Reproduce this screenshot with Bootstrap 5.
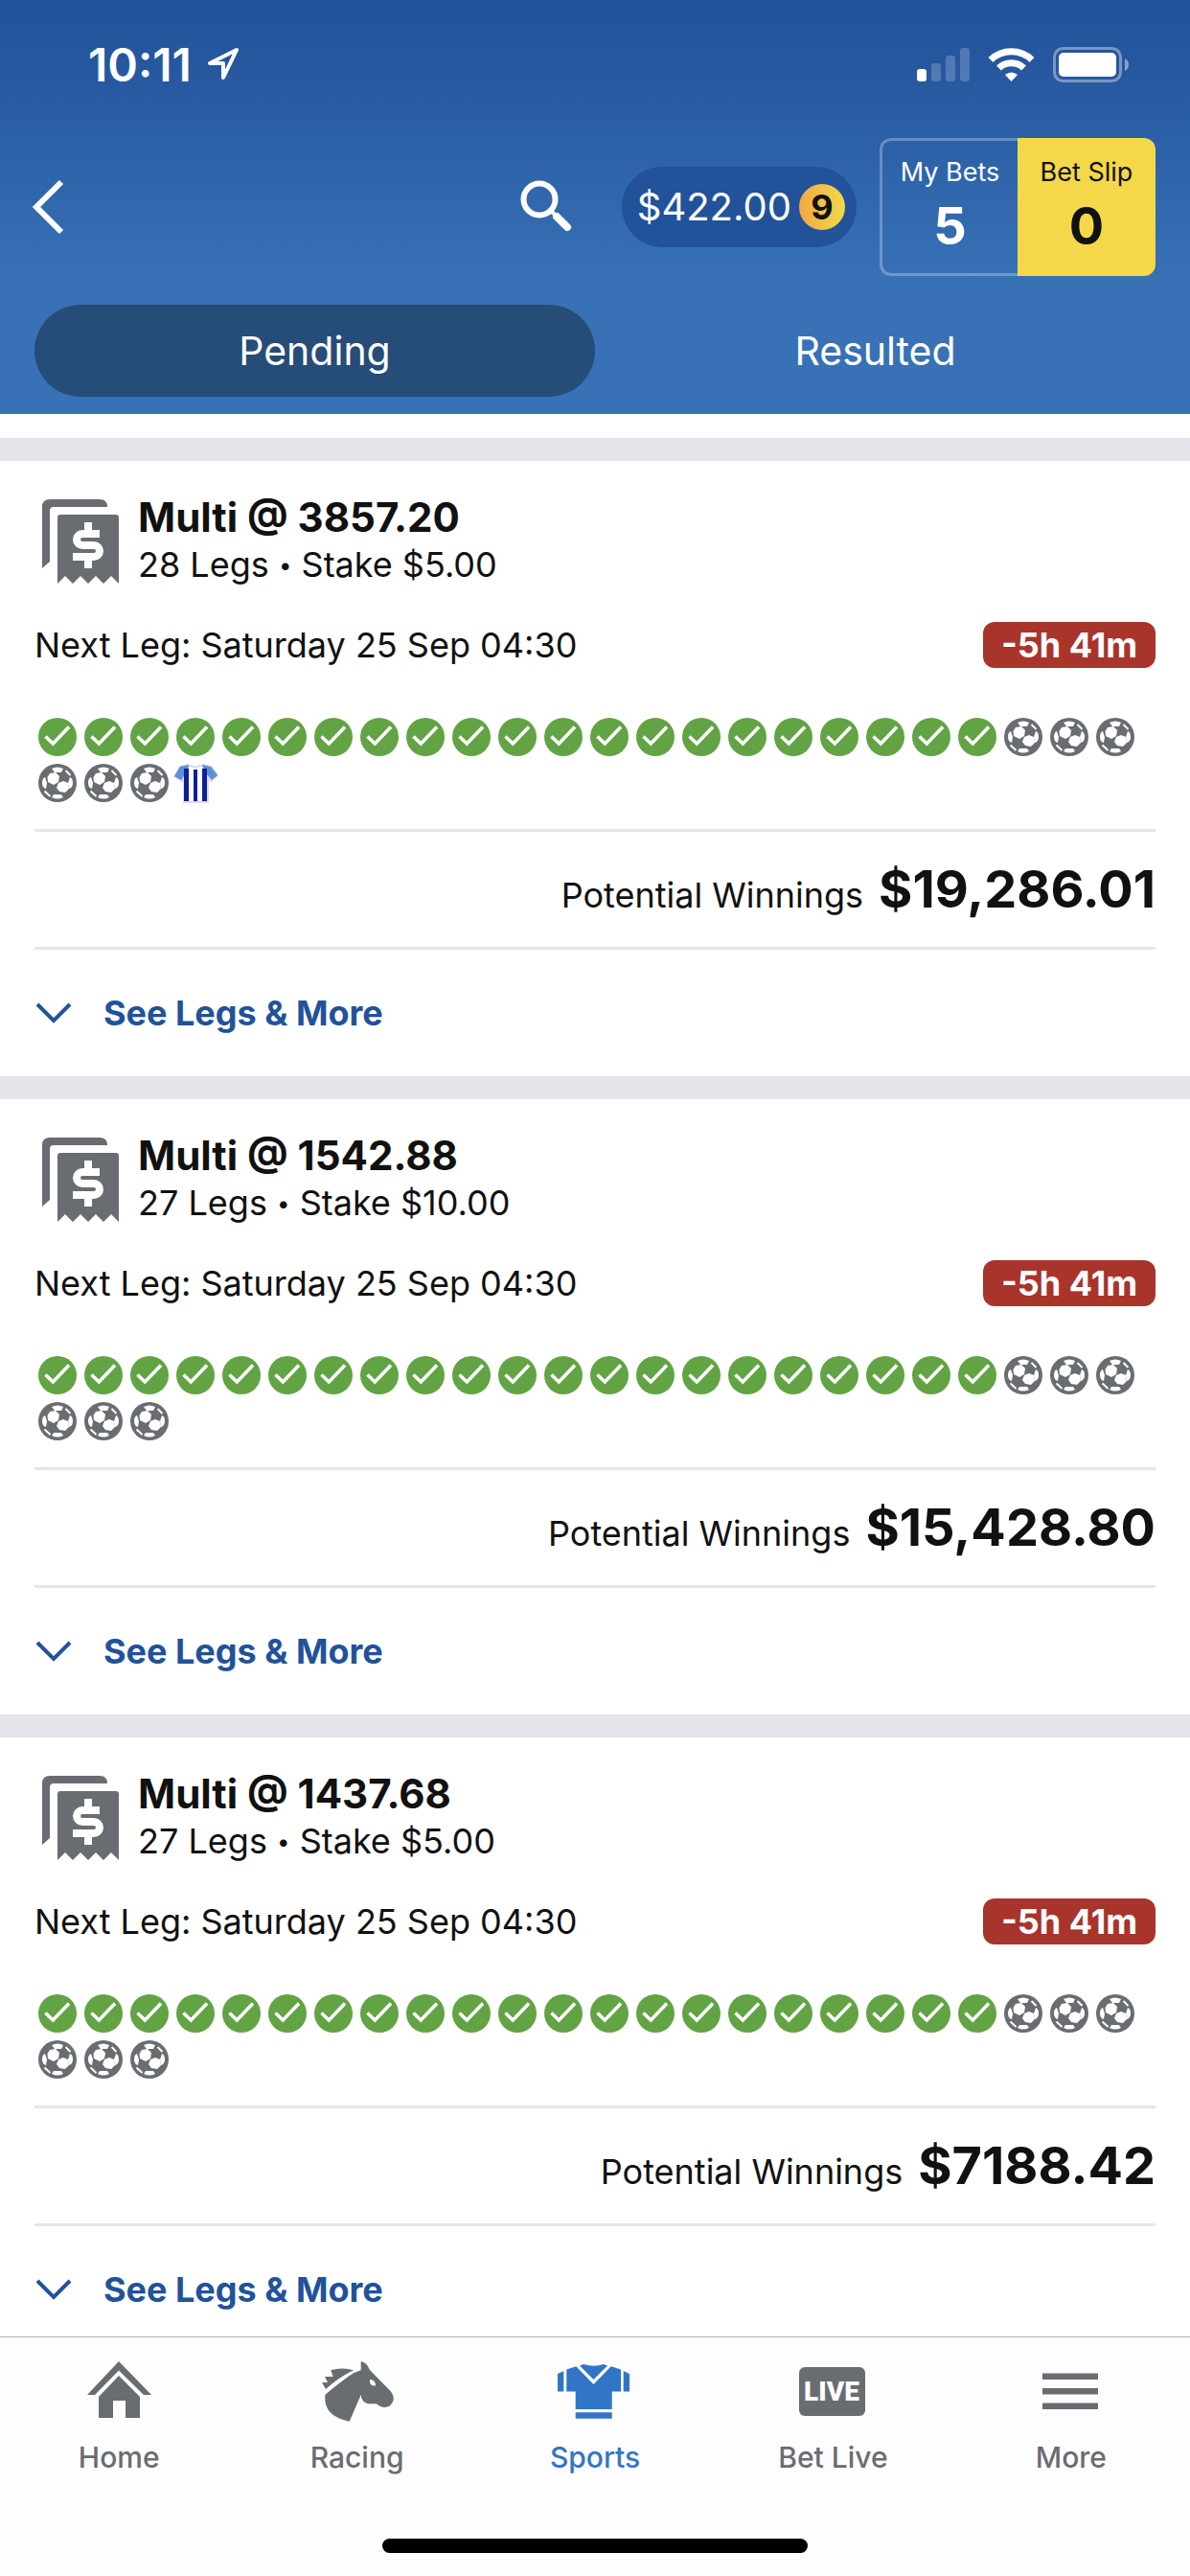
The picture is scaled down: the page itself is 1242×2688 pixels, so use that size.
<!DOCTYPE html>
<html lang="en">
<head>
<meta charset="utf-8">
<meta name="viewport" content="width=device-width, initial-scale=1">
<title>My Bets</title>
<link href="https://cdn.jsdelivr.net/npm/bootstrap@5.3.0/dist/css/bootstrap.min.css" rel="stylesheet">
<style>
  body { font-family: Inter, "Liberation Sans", sans-serif; color: #111; background: #fff; font-size: 36px; line-height: 48px; }
  button, a { font: inherit; }
  svg { display: block; flex: none; }
  .app-header { background: linear-gradient(#21519a 0, #2a5ea5 130px, #3871b5 288px); }
  .status-bar { height: 136px; padding: 0 64px 0 92px; font-size: 48px; }
  .nav-row { padding: 8px 36px 30px 34px; }
  .plain-btn { background: none; border: 0; padding: 0; color: inherit; }
  .balance { height: 84px; padding: 0 12px 0 16px; background: #21529a; font-size: 40px; margin: 0 24px 0 52px; }
  .coin { width: 48px; height: 48px; font-size: 36px; color: #111; background: linear-gradient(90deg, #f0a942, #f4d94a); }
  .bet-tabs { width: 288px; height: 144px; }
  .bet-tabs a { width: 50%; font-size: 27px; line-height: 48px; padding: 12px 0; }
  .bet-tabs strong { display: block; font-size: 54px; line-height: 64px; }
  .tab-mine { color: #fff; border-radius: 12px 0 0 12px; border: 3px solid rgba(255,255,255,.28); border-right: 0; }
  .bet-tabs .tab-mine { padding: 9px 0; }
  .tab-slip { color: #111; background: #f4d849; border-radius: 0 12px 12px 0; }
  .filter-row { padding: 0 36px 18px; }
  .filter-row a { height: 96px; color: #fff; font-size: 41px; border-radius: 48px; }
  .filter-row a.active { background: #264c78; }
  .bet-list { padding-top: 25px; }
  .bet { border-top: 24px solid #e5e6eb; padding: 35px 36px 0; }
  .bet-title { font-size: 42px; line-height: 48px; }
  .bet-sub { line-height: 50px; }
  .bullet { font-size: 24px; line-height: 1; vertical-align: 4px; }
  .next-leg { margin-top: 35px; }
  .due { width: 180px; border-radius: 12px; background: #a8342b; color: #fff; }
  .legs { margin: 48px 0 24px; padding: 0; list-style: none; }
  .winnings { border: solid #e5e6eb; border-width: 3px 0; padding: 27px 0; gap: 16px; }
  .winnings strong { font-size: 54px; line-height: 66px; }
  .see-legs { height: 132px; color: #21529a; gap: 32px; }
  .tab-bar { background: #fdfdfe; border-top: 1px solid #b2b2b2; padding-bottom: 24px; z-index: 10; }
  .tab-bar a { color: #696c71; font-size: 30px; line-height: 40px; padding-top: 23px; gap: 16px; }
  .tab-bar a.active { color: #3176c6; }
  .home-bar { width: 444px; height: 15px; border-radius: 8px; background: #000; margin: 65px auto 0; }
  .live-word { font: 900 28px Roboto, sans-serif; }
</style>
<script src="https://cdn.jsdelivr.net/npm/bootstrap@5.3.0/dist/js/bootstrap.bundle.min.js"></script>
</head>
<body>
<svg width="0" height="0" class="position-absolute" aria-hidden="true">
  <symbol id="won" viewBox="0 0 48 48">
    <circle cx="24" cy="24" r="20" fill="#62a344"/>
    <path d="M11.5 23.5l7.8 7.5L36 13.500" fill="none" stroke="#fff" stroke-width="3.600"/>
  </symbol>
  <symbol id="soccer" viewBox="0 0 48 48">
    <circle cx="24" cy="24" r="20" fill="#696c71"/>
    <g fill="#fff">
      <path d="M16 14l6-1 4 4-1 6-5 3-6-3-.500-5zM30 22l5 2 1 6-4 4-6-1-3-4 2-5z"/>
      <path d="M18 9q6-3 12 0l-2 4h-7zM18 39q6 3 12 0l-2-3h-8zM8 24q0-5 3-6l2 6-1 6q-4-1-4-6zM40 24q0-5-3-6l-2 6 1 6q4-1 4-6z"/>
    </g>
    <path d="M32.500 11l5 5M10.500 32.500l6 5.500" stroke="#fff" stroke-width="2"/>
  </symbol>
  <symbol id="shirt" viewBox="0 0 48 48">
    <path d="M16 5L8 7 2 17l8 5 2-4v26h25V18l3 4 7-6-6-9-9-2-8 3z" fill="#fff" stroke="#dcdce2" stroke-width="2"/>
    <path d="M17 5L8 7 2 17l7 4 7-10zM31 5l9 2 7 9-6 5-8-9z" fill="#5a8fdc"/>
    <path d="M12 9h5v34h-5zM22 10h4v33h-4zM31 9h5v34h-5z" fill="#0b1f98"/>
  </symbol>
  <symbol id="ticket" viewBox="0 0 96 88">
    <path fill="#696c71" d="M8 72V8Q8 0 16 0H68Q76 0 76 8H20Q16 8 16 12V65zM24 88V19Q24 16 27 16H85Q88 16 88 19V88L80 80 72 88 64 80 56 88 48 80 40 88 32 80z"/>
    <path d="M68 36H50a6 6 0 0 0 0 12H62a6 6 0 0 1 0 12H40M56 24v10M56 62v10" fill="none" stroke="#fff" stroke-width="8"/>
  </symbol>
  <symbol id="down" viewBox="0 0 40 24"><path d="M3 3l17 17L37 3" fill="none" stroke="currentColor" stroke-width="4"/></symbol>
</svg>

<header class="app-header text-white">
  <div class="status-bar d-flex align-items-center fw-semibold">
    <span>10:11</span>
    <svg class="ms-3" width="34" height="38" viewBox="0 0 34 38"><path d="M31 3L3 17h14v15z" fill="none" stroke="#fff" stroke-width="4" stroke-linejoin="round"/></svg>
    <svg class="ms-auto" width="222" height="38" viewBox="0 0 222 38">
      <rect x="1" y="23" width="10" height="13" rx="3" fill="#fff"/>
      <g fill="#fff" fill-opacity=".2"><rect x="16" y="17" width="10" height="19" rx="3"/><rect x="31" y="9" width="10" height="27" rx="3"/><rect x="46" y="1" width="10" height="35" rx="3"/></g>
      <g fill="none" stroke="#fff" stroke-width="7"><path d="M78 13.500a31 31 0 0 1 43 0"/><path d="M86.500 22a19 19 0 0 1 26 0"/></g>
      <path d="M99.500 36l-6.500-7q6.500-5 13 0z" fill="#fff"/>
      <rect x="144.500" y="1.500" width="69" height="34" rx="9" fill="none" stroke="#fff" stroke-opacity=".38" stroke-width="3"/>
      <rect x="149" y="6" width="60" height="25" rx="5" fill="#fff"/>
      <path d="M218 12q4 2 4 6.500t-4 6.500z" fill="#fff" fill-opacity=".45"/>
    </svg>
  </div>
  <div class="nav-row d-flex align-items-center">
    <button class="plain-btn" type="button" aria-label="Back">
      <svg width="34" height="58" viewBox="0 0 34 58"><path d="M30 3L4 29l26 26" fill="none" stroke="#fff" stroke-width="6"/></svg>
    </button>
    <button class="plain-btn ms-auto" type="button" aria-label="Search">
      <svg width="54" height="56" viewBox="0 0 54 56"><circle cx="20" cy="20" r="16.500" fill="none" stroke="#fff" stroke-width="6"/><path d="M31 31l6 6" stroke="#fff" stroke-width="4"/><path d="M38 38l11 11" stroke="#fff" stroke-width="8" stroke-linecap="round"/></svg>
    </button>
    <button class="plain-btn balance rounded-pill d-flex align-items-center gap-2" type="button">
      <span>$422.00</span><span class="coin rounded-circle fw-bold d-flex align-items-center justify-content-center">9</span>
    </button>
    <nav class="bet-tabs d-flex text-center">
      <a class="tab-mine text-decoration-none" href="#mybets">My Bets<strong>5</strong></a>
      <a class="tab-slip text-decoration-none" href="#betslip">Bet Slip<strong>0</strong></a>
    </nav>
  </div>
  <nav class="filter-row nav nav-fill flex-nowrap">
    <a class="active w-50 d-flex align-items-center justify-content-center text-decoration-none" href="#pending" aria-current="page">Pending</a>
    <a class="w-50 d-flex align-items-center justify-content-center text-decoration-none" href="#resulted">Resulted</a>
  </nav>
</header>

<main class="bet-list">
  <article class="bet">
    <div class="d-flex align-items-center gap-2">
      <svg width="96" height="88"><use href="#ticket"/></svg>
      <div class="ps-1"><h2 class="bet-title fw-bold m-0">Multi @ 3857.20</h2><div class="bet-sub">28 Legs <span class="bullet">•</span> Stake $5.00</div></div>
    </div>
    <div class="next-leg d-flex justify-content-between"><span>Next Leg: Saturday 25 Sep 04:30</span><span class="due fw-bold text-center">-5h 41m</span></div>
    <ul class="legs d-flex flex-wrap" data-legs="won:21 soccer:6 shirt:1"></ul>
    <div class="winnings d-flex justify-content-end align-items-baseline"><span>Potential Winnings</span><strong>$19,286.01</strong></div>
    <button class="plain-btn see-legs d-flex align-items-center fw-bold" type="button"><svg width="40" height="24"><use href="#down"/></svg>See Legs &amp; More</button>
  </article>
  <article class="bet">
    <div class="d-flex align-items-center gap-2">
      <svg width="96" height="88"><use href="#ticket"/></svg>
      <div class="ps-1"><h2 class="bet-title fw-bold m-0">Multi @ 1542.88</h2><div class="bet-sub">27 Legs <span class="bullet">•</span> Stake $10.00</div></div>
    </div>
    <div class="next-leg d-flex justify-content-between"><span>Next Leg: Saturday 25 Sep 04:30</span><span class="due fw-bold text-center">-5h 41m</span></div>
    <ul class="legs d-flex flex-wrap" data-legs="won:21 soccer:6"></ul>
    <div class="winnings d-flex justify-content-end align-items-baseline"><span>Potential Winnings</span><strong>$15,428.80</strong></div>
    <button class="plain-btn see-legs d-flex align-items-center fw-bold" type="button"><svg width="40" height="24"><use href="#down"/></svg>See Legs &amp; More</button>
  </article>
  <article class="bet">
    <div class="d-flex align-items-center gap-2">
      <svg width="96" height="88"><use href="#ticket"/></svg>
      <div class="ps-1"><h2 class="bet-title fw-bold m-0">Multi @ 1437.68</h2><div class="bet-sub">27 Legs <span class="bullet">•</span> Stake $5.00</div></div>
    </div>
    <div class="next-leg d-flex justify-content-between"><span>Next Leg: Saturday 25 Sep 04:30</span><span class="due fw-bold text-center">-5h 41m</span></div>
    <ul class="legs d-flex flex-wrap" data-legs="won:21 soccer:6"></ul>
    <div class="winnings d-flex justify-content-end align-items-baseline"><span>Potential Winnings</span><strong>$7188.42</strong></div>
    <button class="plain-btn see-legs d-flex align-items-center fw-bold" type="button"><svg width="40" height="24"><use href="#down"/></svg>See Legs &amp; More</button>
  </article>
</main>

<footer class="tab-bar fixed-bottom">
  <nav class="row g-0 fw-medium">
    <a class="col d-flex flex-column align-items-center text-decoration-none" href="#home">
      <svg width="80" height="66" viewBox="0 0 80 66" fill="currentColor"><path d="M40 2L74 37H66L40 11.500 15 37H7zM40 17L62 39V61H47V43H34V61H19V39z"/></svg>Home</a>
    <a class="col d-flex flex-column align-items-center text-decoration-none" href="#racing">
      <svg width="80" height="66" viewBox="0 0 80 66" fill="currentColor"><path fill-rule="evenodd" d="M43.700 2Q50 3 52.700 10.700L74.500 33Q78 37 77.700 42 76 49 68.700 50 64 50 59.700 46.300H51Q44 44 43.700 37L31.700 64.700Q8 60 6.300 43V37Q14 30 30.300 18 37 13 43.700 11.300zM53 21Q59 21 59 27.500 54 28 53 24z"/><path d="M36 11.300Q24 7.500 12.300 11.300L14.700 18H6L9 24H3L7 31Q20 19 36 11.300z"/></svg>Racing</a>
    <a class="col active d-flex flex-column align-items-center text-decoration-none" href="#sports" aria-current="page">
      <svg width="80" height="66" viewBox="0 0 80 66" fill="currentColor"><path d="M1 15L7.300 12V33.500H1zM76 15L69.700 12V33.500H76zM10.300 10.500L20.300 7.300 38.500 26 56.700 7.300 67 10.500V33.500H57.700V52H19.700V33.500H10.300zM24 6.500L28 5Q38.500 8.500 49 5L53 6.500 38.500 21zM19.700 55.300H57.700V61.700H19.700z"/></svg>Sports</a>
    <a class="col d-flex flex-column align-items-center text-decoration-none" href="#live">
      <svg width="80" height="66" viewBox="0 0 80 66"><rect x="5" y="8" width="69" height="51" rx="6" fill="currentColor"/><text class="live-word" x="39" y="43" fill="#fff" text-anchor="middle">LIVE</text></svg>Bet Live</a>
    <a class="col d-flex flex-column align-items-center text-decoration-none" href="#more">
      <svg width="80" height="66" viewBox="0 0 80 66" fill="currentColor"><path d="M10 14.500H68V21H10zM10 30H68V36.500H10zM10 45.500H68V52H10z"/></svg>More</a>
  </nav>
  <div class="home-bar"></div>
</footer>

<script>
  // Expand "icon:count" pairs into one list item per leg.
  document.querySelectorAll('[data-legs]').forEach(function (list) {
    list.dataset.legs.split(' ').forEach(function (pair) {
      var parts = pair.split(':');
      for (var i = 0; i < +parts[1]; i++) {
        list.insertAdjacentHTML('beforeend', '<li><svg width="48" height="48"><use href="#' + parts[0] + '"/></svg></li>');
      }
    });
  });
</script>
</body>
</html>
